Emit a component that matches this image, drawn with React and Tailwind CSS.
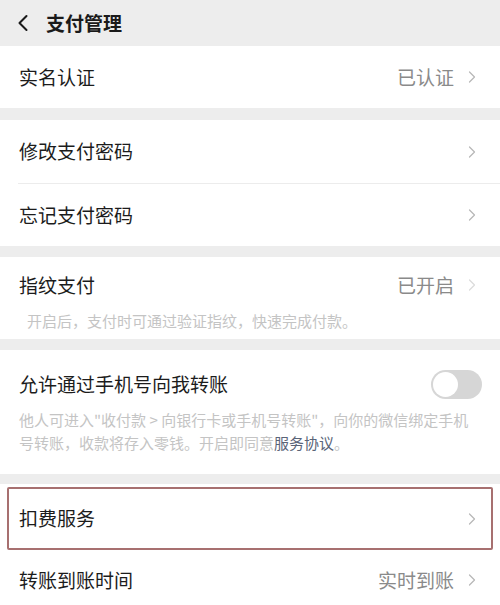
import { ChevronLeft, ChevronRight } from 'lucide-react'

const FONT = { fontFamily: '"Noto Sans CJK SC", "Noto Sans", sans-serif' }

function Arrow() {
  return <ChevronRight size={20} strokeWidth={1.5} className="text-[#b8b8b8] shrink-0" />
}

function Row({ title, value, height = 'h-[62px]' }) {
  return (
    <div className={`flex items-center justify-between pl-[19px] pr-[18px] ${height}`}>
      <span className="text-[19px] text-[#1c1c1c]">{title}</span>
      <div className="flex items-center gap-[8px]">
        {value && <span className="text-[19px] text-[#8a8a8a]">{value}</span>}
        <Arrow />
      </div>
    </div>
  )
}

function Toggle() {
  return (
    <div className="w-[51px] h-[29px] rounded-full bg-[#d6d6d6] p-[2px] flex items-center shrink-0">
      <div className="w-[25px] h-[25px] rounded-full bg-white" />
    </div>
  )
}

export default function App() {
  return (
    <div className="w-[500px] h-[605px] overflow-hidden bg-[#ededed]" style={FONT}>
      {/* Header */}
      <div className="h-[46px] flex items-center pl-[9px]">
        <ChevronLeft size={28} strokeWidth={1.75} className="text-[#1a1a1a]" />
        <span className="ml-[9px] text-[19px] font-bold text-[#1a1a1a]">支付管理</span>
      </div>

      <div className="bg-white">
        <Row title="实名认证" value="已认证" />
      </div>

      <div className="bg-white mt-[12px]">
        <div className="ml-[18px] border-b border-[#ececec]">
          <div className="-ml-[18px]">
            <Row title="修改支付密码" height="h-[63px]" />
          </div>
        </div>
        <Row title="忘记支付密码" />
      </div>

      <div className="bg-white mt-[11px] pb-[7px]">
        <div className="flex items-center justify-between pl-[19px] pr-[18px] pt-[12px] h-[44px]">
          <span className="text-[19px] text-[#1c1c1c]">指纹支付</span>
          <div className="flex items-center gap-[8px]">
            <span className="text-[19px] text-[#8a8a8a]">已开启</span>
            <ChevronRight size={20} strokeWidth={1.5} className="text-[#dcdcdc]" />
          </div>
        </div>
        <p className="pl-[27px] mt-[9px] text-[15px] leading-[22px] text-[#c4c4c4]">
          开启后，支付时可通过验证指纹，快速完成付款。
        </p>
      </div>

      <div className="bg-white mt-[11px] pb-[20px]">
        <div className="flex items-center justify-between pl-[19px] pr-[18px] pt-[18px] h-[50px]">
          <span className="text-[19px] text-[#1c1c1c]">允许通过手机号向我转账</span>
          <Toggle />
        </div>
        <p className="pl-[19px] pr-[24px] mt-[8px] text-[15px] leading-[23px] text-[#c4c4c4]">
          他人可进入"收付款 &gt; 向银行卡或手机号转账"，向你的微信绑定手机号转账，收款将存入零钱。开启即同意<span className="text-[#5a6478]">服务协议</span>。
        </p>
      </div>

      <div className="bg-white mt-[10px] pt-[3px]">
        <div className="mx-[7px] border-2 border-[#a77070] rounded-[2px]">
          <div className="flex items-center justify-between pl-[10px] pr-[9px] h-[59px]">
            <span className="text-[19px] text-[#1c1c1c]">扣费服务</span>
            <Arrow />
          </div>
        </div>
        <Row title="转账到账时间" value="实时到账" height="h-[60px]" />
      </div>
    </div>
  )
}
